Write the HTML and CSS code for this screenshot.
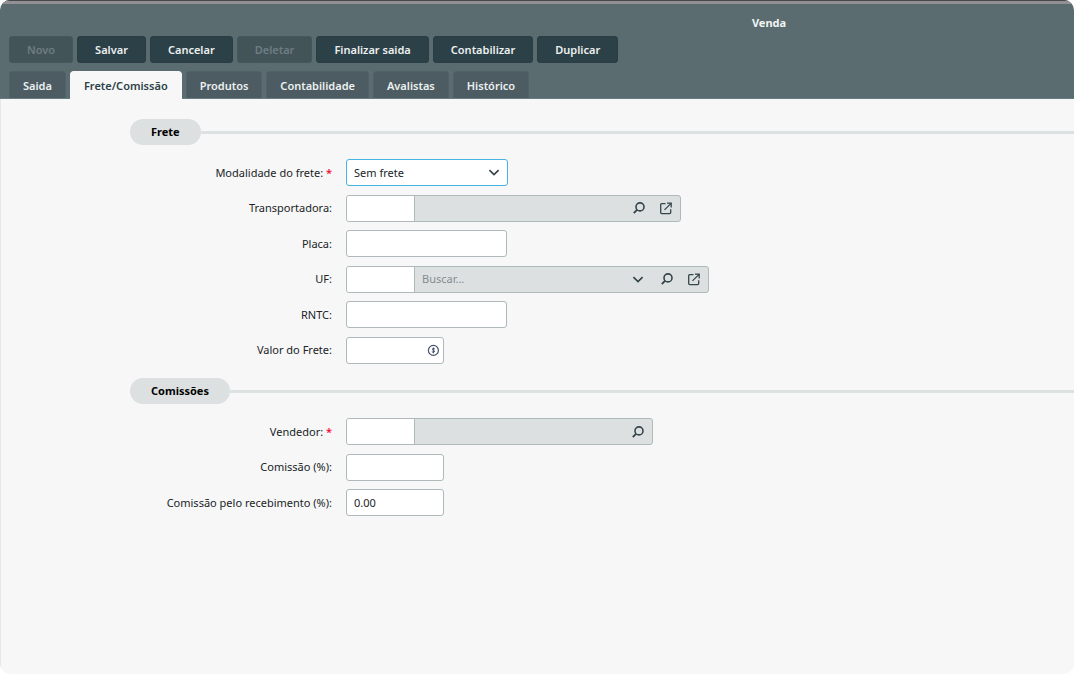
FILE: index.html
```html
<!DOCTYPE html>
<html lang="pt-BR">
<head>
<meta charset="utf-8">
<meta name="viewport" content="width=device-width, initial-scale=1">
<title>Venda</title>
<link rel="stylesheet" href="styles.css">
</head>
<body>
<svg class="sprite" aria-hidden="true">
  <symbol id="search" viewBox="0 0 14 14"><circle cx="8" cy="5.9" r="4" fill="none" stroke="currentColor" stroke-width="1.6"/><path d="M5.2 8.7 1.8 12.2" fill="none" stroke="currentColor" stroke-width="1.9"/></symbol>
  <symbol id="open" viewBox="0 0 14 14"><path d="M6.5 2.6H2.7Q1.7 2.6 1.7 3.6V11.6Q1.7 12.6 2.7 12.6H10.7Q11.7 12.6 11.7 11.6V8.2" fill="none" stroke="currentColor" stroke-width="1.3"/><path d="M5.5 8.9 11.5 2.9M8 2.2H12.2V6.4" fill="none" stroke="currentColor" stroke-width="1.3"/></symbol>
  <symbol id="chevron" viewBox="0 0 14 14"><path d="M2.4 5.2 7 9.6 11.6 5.2" fill="none" stroke="currentColor" stroke-width="1.7"/></symbol>
  <symbol id="coin" viewBox="0 0 14 14"><circle cx="7.4" cy="7.4" r="5" fill="none" stroke="currentColor" stroke-width="1.2"/><path d="M8.9 6Q7.4 5 6.3 5.9C5.7 7.1 9.3 7.4 8.6 8.7Q7.4 9.6 5.8 8.8M7.4 4.5V10.3" fill="none" stroke="currentColor" stroke-width="1"/></symbol>
</svg>
<div class="window">
  <header class="header">
    <h1 class="title">Venda</h1>
    <div class="toolbar">
      <button class="action" type="button" disabled>Novo</button>
      <button class="action" type="button">Salvar</button>
      <button class="action" type="button">Cancelar</button>
      <button class="action" type="button" disabled>Deletar</button>
      <button class="action" type="button">Finalizar saida</button>
      <button class="action" type="button">Contabilizar</button>
      <button class="action" type="button">Duplicar</button>
    </div>
    <nav class="tabs">
      <a class="tab" href="#saida">Saida</a>
      <a class="tab active" href="#frete" aria-current="page">Frete/Comissão</a>
      <a class="tab" href="#produtos">Produtos</a>
      <a class="tab" href="#contabilidade">Contabilidade</a>
      <a class="tab" href="#avalistas">Avalistas</a>
      <a class="tab" href="#historico">Histórico</a>
    </nav>
  </header>
  <main class="content">
    <section>
      <div class="section-head"><h2 class="pill">Frete</h2></div>
      <div class="fields freight">
        <div class="row">
          <label class="label" for="modalidade">Modalidade do frete: <span class="required">*</span></label>
          <div class="select-wrap">
            <select class="field select" id="modalidade"><option>Sem frete</option></select>
            <svg class="icon select-arrow" aria-hidden="true"><use href="#chevron"/></svg>
          </div>
        </div>
        <div class="row">
          <label class="label" for="transportadora">Transportadora:</label>
          <div class="lookup carrier">
            <input class="code" id="transportadora" type="text">
            <input class="lookup-name" type="text" aria-label="Nome da transportadora">
            <button class="tool" type="button" aria-label="Pesquisar"><svg class="icon"><use href="#search"/></svg></button>
            <button class="tool" type="button" aria-label="Abrir"><svg class="icon"><use href="#open"/></svg></button>
          </div>
        </div>
        <div class="row">
          <label class="label" for="placa">Placa:</label>
          <input class="field medium" id="placa" type="text">
        </div>
        <div class="row">
          <label class="label" for="uf">UF:</label>
          <div class="lookup state">
            <input class="code" id="uf" type="text">
            <input class="lookup-name" type="text" placeholder="Buscar..." aria-label="Buscar UF">
            <button class="tool list" type="button" aria-label="Listar"><svg class="icon"><use href="#chevron"/></svg></button>
            <button class="tool" type="button" aria-label="Pesquisar"><svg class="icon"><use href="#search"/></svg></button>
            <button class="tool" type="button" aria-label="Abrir"><svg class="icon"><use href="#open"/></svg></button>
          </div>
        </div>
        <div class="row">
          <label class="label" for="rntc">RNTC:</label>
          <input class="field medium" id="rntc" type="text">
        </div>
        <div class="row">
          <label class="label" for="valor">Valor do Frete:</label>
          <div class="field small money">
            <input class="money-input" id="valor" type="text">
            <svg class="icon coin" aria-hidden="true"><use href="#coin"/></svg>
          </div>
        </div>
      </div>
    </section>
    <section>
      <div class="section-head"><h2 class="pill">Comissões</h2></div>
      <div class="fields commission">
        <div class="row">
          <label class="label" for="vendedor">Vendedor: <span class="required">*</span></label>
          <div class="lookup seller">
            <input class="code" id="vendedor" type="text">
            <input class="lookup-name" type="text" aria-label="Nome do vendedor">
            <button class="tool" type="button" aria-label="Pesquisar"><svg class="icon"><use href="#search"/></svg></button>
          </div>
        </div>
        <div class="row">
          <label class="label" for="comissao">Comissão (%):</label>
          <input class="field small" id="comissao" type="text">
        </div>
        <div class="row">
          <label class="label" for="recebimento">Comissão pelo recebimento (%):</label>
          <input class="field small" id="recebimento" type="text" value="0.00">
        </div>
      </div>
    </section>
  </main>
</div>
</body>
</html>
```
FILE: styles.css
```css
* {
  box-sizing: border-box;
}

body {
  margin: 0;
  background: #fff;
  color: #202426;
  font-family: "Noto Sans", "Open Sans", sans-serif;
  font-size: 11px;
  line-height: 16px;
}

button,
input,
select {
  margin: 0;
  color: inherit;
  font: inherit;
}

.sprite {
  position: absolute;
  width: 0;
  height: 0;
}

.window {
  display: flex;
  flex-direction: column;
  min-height: 100vh;
  overflow: hidden;
  border-radius: 10px;
  background: #f7f7f7;
}

.header {
  border-top: 1px solid #46484c;
  border-bottom: 1px solid #667c82;
  background: #5b6c70;
  box-shadow: inset 0 3px #929092;
  padding: 14px 9px 0;
}

.title {
  margin: 0;
  padding-left: 464px;
  color: #f1f4f4;
  font-size: 11px;
  font-weight: 700;
  text-align: center;
}

.toolbar {
  display: flex;
  gap: 4px;
  margin-top: 5px;
}

.action {
  height: 27px;
  padding: 0 17px;
  border: 1px solid #293d43;
  border-radius: 3px;
  background: #2c4147;
  color: #edf0f0;
  font-weight: 600;
}

.action:disabled {
  border-color: #46575c;
  background: #435459;
  color: #6e7d82;
}

.tabs {
  display: flex;
  gap: 4px;
  margin-top: 8px;
}

.tab {
  height: 27px;
  padding: 6px 13px 5px;
  border: 1px solid #506167;
  border-bottom: 0;
  border-radius: 4px 4px 0 0;
  background: #4c5c62;
  color: #edf0f0;
  font-weight: 600;
  text-decoration: none;
}

.tab.active {
  margin-bottom: -1px;
  height: 28px;
  border-color: #f7f7f7;
  background: #f7f7f7;
  color: #2c4147;
}

.content {
  flex: 1;
  border-left: 1px solid #e3e8e9;
  padding-top: 20px;
}

.section-head {
  display: flex;
  align-items: center;
  padding-left: 129px;
}

.section-head::after {
  content: "";
  flex: 1;
  height: 3px;
  background: #dce1e2;
}

.pill {
  margin: 0;
  padding: 5px 21px;
  border-radius: 13px;
  background: #dce0e1;
  color: #000;
  font-size: 11px;
  font-weight: 700;
}

.fields {
  display: grid;
  align-content: space-between;
  margin: 14px 0;
}

.freight {
  min-height: 205px;
}

.commission {
  min-height: 98px;
}

.row {
  display: flex;
  align-items: center;
  gap: 14px;
  height: 27px;
}

.label {
  width: 331px;
  text-align: right;
}

.required {
  color: #f0103c;
  font-weight: 600;
}

.field,
.lookup {
  height: 27px;
  border: 1px solid #aeb9bc;
  border-radius: 3px;
  background: #fff;
}

.field {
  padding: 0 7px;
}

.small {
  width: 98px;
}

.medium {
  width: 161px;
}

.select-wrap {
  position: relative;
}

.select {
  width: 162px;
  border-color: #47b4e2;
  appearance: none;
}

.select-arrow {
  position: absolute;
  top: 6px;
  right: 7px;
  pointer-events: none;
}

.icon {
  display: block;
  width: 14px;
  height: 14px;
  color: #34454b;
}

.lookup {
  display: flex;
  align-items: center;
  gap: 13px;
  overflow: hidden;
  padding-right: 7px;
  background: #dce0e1;
}

.carrier {
  width: 335px;
}

.state {
  width: 363px;
}

.seller {
  width: 307px;
}

.code {
  width: 68px;
  height: 100%;
  margin-right: -13px;
  padding: 0 7px;
  border: 0;
  border-right: 1px solid #aeb9bc;
  background: #fff;
}

.lookup-name {
  flex: 1;
  min-width: 0;
  padding: 0 7px;
  border: 0;
  background: transparent;
}

.lookup-name::placeholder {
  color: #858c8f;
}

.tool {
  padding: 0;
  border: 0;
  background: transparent;
}

.list {
  margin-right: 2px;
}

.money {
  display: flex;
  align-items: center;
  padding: 0 3px 0 7px;
}

.money-input {
  flex: 1;
  min-width: 0;
  padding: 0;
  border: 0;
  background: transparent;
}

.coin {
  color: #46506e;
}
```
